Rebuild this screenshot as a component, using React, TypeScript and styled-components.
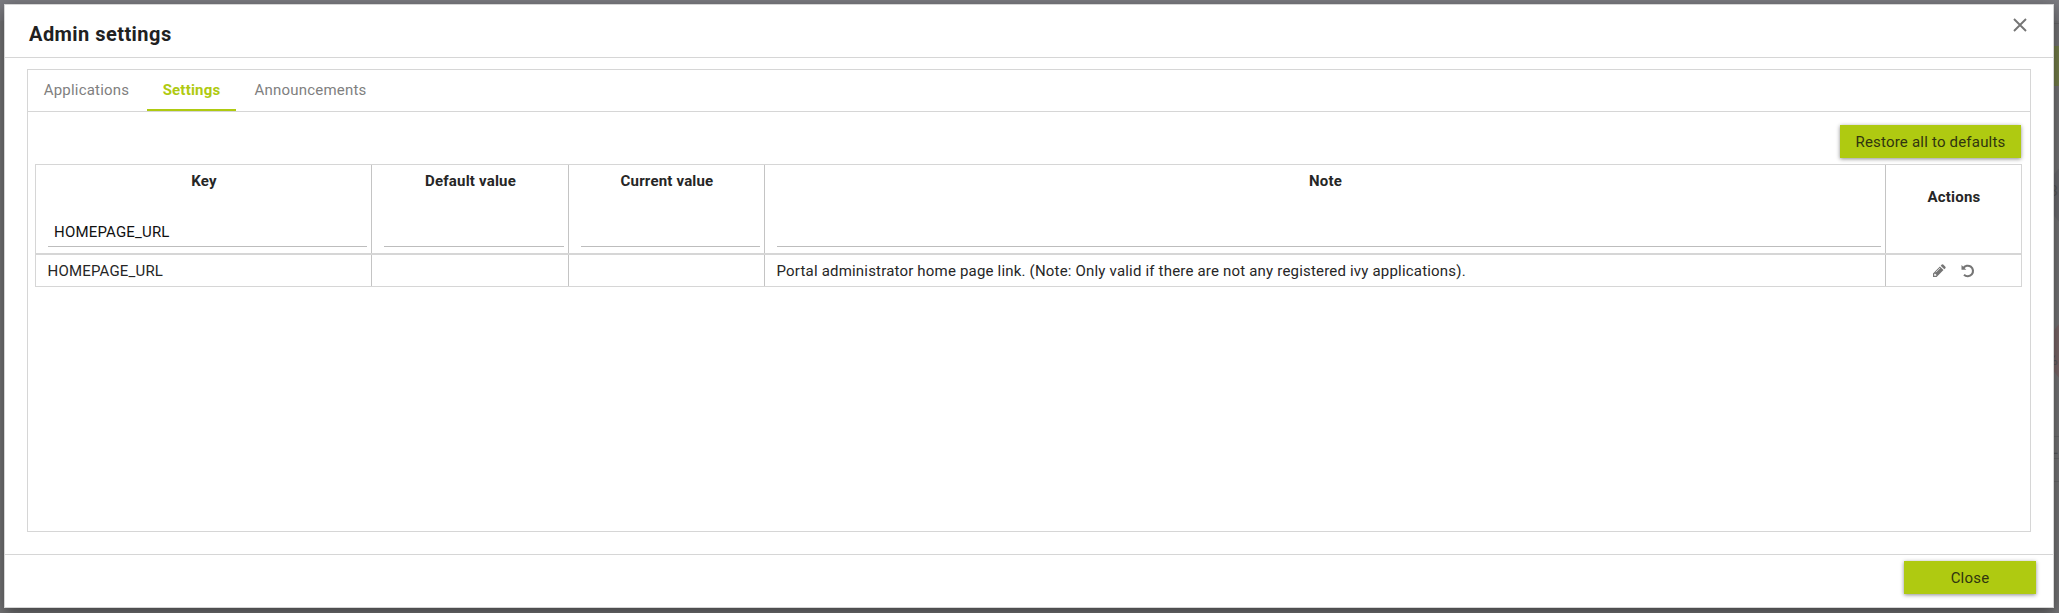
import React from "react";
import styled, { createGlobalStyle } from "styled-components";

const line = "#d6d6d6";
const lime = "#afca11";

const GlobalStyle = createGlobalStyle`
  * { box-sizing: border-box; }
  body {
    margin: 0;
    overflow: hidden;
    font-family: Roboto, "Liberation Sans", sans-serif;
    font-size: 15px;
    line-height: 18px;
    letter-spacing: 0.19px;
    color: #262626;
  }
`;

const Backdrop = styled.div`
  position: relative;
  overflow: hidden;
  width: 2059px;
  height: 613px;
  padding: 4px 5px 5px 4px;
  background: linear-gradient(#7b7b80 0, #7b7b80 20px, #757577 21px, #757577 100%);
`;

const BackdropAction = styled.div`
  position: absolute;
  right: 0;
  top: 46px;
  width: 12px;
  height: 40px;
  background: #757f4a;
`;

const BackdropCircle = styled.div<{ $top: number; $color: string }>`
  position: absolute;
  left: 2052px;
  top: ${(p) => p.$top}px;
  width: 76px;
  height: 76px;
  margin-left: -4px;
  border-radius: 50%;
  background: ${(p) => p.$color};
`;

const BackdropText = styled.span<{ $top: number }>`
  position: absolute;
  right: 1px;
  top: ${(p) => p.$top}px;
  color: #58585a;
`;

const BackdropRule = styled.div<{ $top: number }>`
  position: absolute;
  right: 0;
  top: ${(p) => p.$top}px;
  width: 10px;
  height: 1px;
  background: #69696b;
`;

const Dialog = styled.section`
  position: relative;
  display: flex;
  flex-direction: column;
  height: 604px;
  background: #fff;
  border: 1px solid ${line};
  box-shadow: 0 5px 14px rgba(0, 0, 0, 0.45);
`;

const Header = styled.header`
  display: flex;
  justify-content: space-between;
  align-items: flex-start;
  height: 53px;
  padding: 17px 26px 0 24px;
  border-bottom: 1px solid ${line};
`;

const Title = styled.h1`
  margin: 0;
  font-size: 20px;
  line-height: 24px;
  font-weight: 700;
  letter-spacing: 0.45px;
  color: #212121;
`;

const CloseIcon = styled.svg`
  width: 14px;
  height: 14px;
  margin-top: -4px;
  stroke: #757575;
  stroke-width: 1.9;
`;

const Body = styled.main`
  flex: 1;
  padding: 11px 22px 22px;
`;

const Panel = styled.div`
  height: 463px;
  border: 1px solid ${line};
`;

const Tabs = styled.nav`
  display: flex;
  gap: 2px;
  height: 42px;
  border-bottom: 1px solid ${line};
`;

const Tab = styled.button<{ $active?: boolean; $width: number }>`
  width: ${(p) => p.$width}px;
  padding: 0;
  border: 0;
  border-bottom: 2px solid ${(p) => (p.$active ? lime : "transparent")};
  background: none;
  font: inherit;
  font-weight: ${(p) => (p.$active ? 700 : 400)};
  letter-spacing: 0.2px;
  color: ${(p) => (p.$active ? lime : "#808080")};
`;

const Toolbar = styled.div`
  display: flex;
  justify-content: flex-end;
  padding: 13px 9px 6px;
`;

const Button = styled.button<{ $width: number }>`
  width: ${(p) => p.$width}px;
  height: 33px;
  padding: 1px 0 0;
  border: 0;
  background: ${lime};
  font: inherit;
  letter-spacing: 0.2px;
  color: #30350f;
  box-shadow: 0 1px 4px rgba(0, 0, 0, 0.45);
`;

const Grid = styled.div`
  width: 1987px;
  margin-left: 7px;
  border: 1px solid ${line};
`;

const Row = styled.div<{ $head?: boolean }>`
  display: grid;
  grid-template-columns: 336px 197px 196px 1121px 1fr;
  height: ${(p) => (p.$head ? 90 : 31)}px;
  border-bottom: ${(p) => (p.$head ? `2px solid ${line}` : "0")};
`;

const HeadCell = styled.div`
  display: flex;
  flex-direction: column;
  justify-content: space-between;
  padding: 7px 4px 6px 12px;
  border-right: 1px solid #c4c4c4;
  font-weight: 700;
`;

const HeadLabel = styled.span`
  margin-left: -7px;
  text-align: center;
`;

const Filter = styled.input`
  width: 100%;
  height: 30px;
  padding: 1px 6px 0;
  border: 0;
  border-bottom: 1px solid #bdbdbd;
  outline: 0;
  font: inherit;
  font-weight: 400;
  letter-spacing: inherit;
  color: #111;
`;

const ActionsHead = styled.div`
  display: flex;
  justify-content: center;
  padding: 23px 0 0 1px;
  font-weight: 700;
`;

const Cell = styled.div`
  padding: 7px 11.5px 0;
  border-right: 1px solid #c4c4c4;
  white-space: nowrap;
`;

const ActionCell = styled.div`
  display: flex;
  justify-content: center;
  gap: 15px;
  padding-top: 9px;
`;

const ActionIcon = styled.svg`
  width: 14px;
  height: 14px;
  color: #757575;
`;

const Footer = styled.footer`
  display: flex;
  justify-content: flex-end;
  height: 53px;
  padding: 6px 17px 0;
  border-top: 1px solid ${line};
`;

const columns = [
  { label: "Key", filter: "HOMEPAGE_URL" },
  { label: "Default value", filter: "" },
  { label: "Current value", filter: "" },
  { label: "Note", filter: "" },
];

const values = [
  "HOMEPAGE_URL",
  "",
  "",
  "Portal administrator home page link. (Note: Only valid if there are not any registered ivy applications).",
];

export default function App() {
  return (
    <Backdrop>
      <GlobalStyle />
      <BackdropRule $top={23} />
      <BackdropAction />
      <BackdropCircle $top={157} $color="#6c6c70" />
      <BackdropText $top={182}>3</BackdropText>
      <BackdropCircle $top={313} $color="#7b6769" />
      <BackdropText $top={351}>%</BackdropText>
      <BackdropRule $top={436} />
      <BackdropText $top={440}>L</BackdropText>
      <BackdropRule $top={458} />
      <BackdropRule $top={481} />
      <Dialog>
        <Header>
          <Title>Admin settings</Title>
          <CloseIcon viewBox="0 0 14 14">
            <path d="M1 1L13 13M13 1L1 13" />
          </CloseIcon>
        </Header>
        <Body>
          <Panel>
            <Tabs>
              <Tab $width={117}>Applications</Tab>
              <Tab $width={89} $active>Settings</Tab>
              <Tab $width={145}>Announcements</Tab>
            </Tabs>
            <Toolbar>
              <Button $width={181}>Restore all to defaults</Button>
            </Toolbar>
            <Grid>
              <Row $head>
                {columns.map((c) => (
                  <HeadCell key={c.label}>
                    <HeadLabel>{c.label}</HeadLabel>
                    <Filter defaultValue={c.filter} aria-label={c.label} />
                  </HeadCell>
                ))}
                <ActionsHead>Actions</ActionsHead>
              </Row>
              <Row>
                {values.map((v, i) => (
                  <Cell key={i}>{v}</Cell>
                ))}
                <ActionCell>
                  <ActionIcon viewBox="0 0 14 14" fill="currentColor">
                    <path d="M1 9.4L7.9 2.5L11.5 6.1L4.6 13H1ZM2.2 10.2V11.8H4L4.6 11.1L2.9 9.4ZM8.7 1.7L9.8 .6Q10.5 0 11.2 .6L13.4 2.8Q14 3.5 13.4 4.2L12.3 5.3Z" fillRule="evenodd" />
                    <path d="M3.9 8.2L8.2 3.9" stroke="#fff" strokeWidth=".7" />
                  </ActionIcon>
                  <ActionIcon viewBox="0 0 14 14" fill="none" stroke="currentColor" strokeWidth="2.1">
                    <path d="M2.2 4.2A5.3 5.3 0 1 1 3 10.8" />
                    <path d="M.5 1V5.8H5.3Z" fill="currentColor" stroke="none" />
                  </ActionIcon>
                </ActionCell>
              </Row>
            </Grid>
          </Panel>
        </Body>
        <Footer>
          <Button $width={132}>Close</Button>
        </Footer>
      </Dialog>
    </Backdrop>
  );
}
